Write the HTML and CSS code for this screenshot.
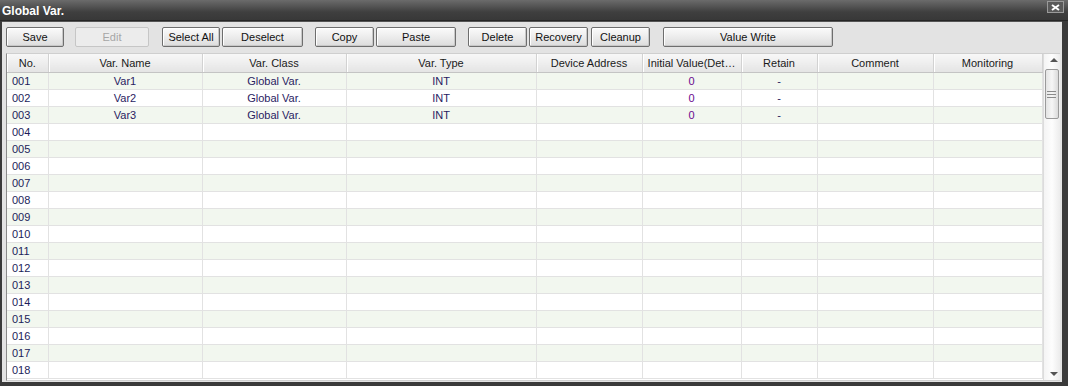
FILE: index.html
```html
<!DOCTYPE html>
<html lang="en">
<head>
    <meta charset="UTF-8">
    <title>Global Var.</title>
    <link rel="stylesheet" href="styles.css">
</head>
<body>
    <div class="window">
        <div class="titlebar">
            <span class="title">Global Var.</span>
            <span class="close">
                <svg width="11" height="7" viewBox="0 0 11 7"><path d="M2 1 L9 6 M9 1 L2 6" stroke="#fff" stroke-width="2"/></svg>
            </span>
        </div>

        <div class="panel">
            <!-- Toolbar -->
            <div class="toolbar">
                <div class="group"><button class="btn w58">Save</button></div>
                <div class="group g11"><button class="btn w74" disabled>Edit</button></div>
                <div class="group g13">
                    <button class="btn w58">Select All</button>
                    <button class="btn w81">Deselect</button>
                </div>
                <div class="group">
                    <button class="btn w59">Copy</button>
                    <button class="btn w80">Paste</button>
                </div>
                <div class="group">
                    <button class="btn w59">Delete</button>
                    <button class="btn w59">Recovery</button>
                    <button class="btn w59 m1">Cleanup</button>
                </div>
                <div class="group g14"><button class="btn w170">Value Write</button></div>
            </div>

            <!-- Variable grid -->
            <div class="grid">
                <table class="vars">
                    <colgroup>
                        <col style="width:41px">
                        <col style="width:154px">
                        <col style="width:144px">
                        <col style="width:190px">
                        <col style="width:106px">
                        <col style="width:99px">
                        <col style="width:76px">
                        <col style="width:116px">
                        <col style="width:109px">
                    </colgroup>
                    <thead>
                        <tr>
                            <th>No.</th>
                            <th>Var. Name</th>
                            <th>Var. Class</th>
                            <th>Var. Type</th>
                            <th>Device Address</th>
                            <th>Initial Value(Det…</th>
                            <th>Retain</th>
                            <th>Comment</th>
                            <th>Monitoring</th>
                        </tr>
                    </thead>
                    <tbody id="rows"></tbody>
                </table>

                <div class="scrollbar">
                    <div class="arrow up"></div>
                    <div class="track">
                        <div class="thumb"><span></span><span></span><span></span></div>
                    </div>
                    <div class="arrow down"></div>
                </div>
            </div>
        </div>
    </div>

    <script>
        // Fill the grid with the declared variables and empty slots
        const vars = [
            { name: 'Var1', cls: 'Global Var.', type: 'INT', init: '0', retain: '-' },
            { name: 'Var2', cls: 'Global Var.', type: 'INT', init: '0', retain: '-' },
            { name: 'Var3', cls: 'Global Var.', type: 'INT', init: '0', retain: '-' }
        ];
        const rowsEl = document.getElementById('rows');

        for (let i = 0; i < 18; i++) {
            const v = vars[i] || {};
            const tr = document.createElement('tr');
            tr.innerHTML = `
                <td class="num">${String(i + 1).padStart(3, '0')}</td>
                <td>${v.name || ''}</td>
                <td>${v.cls || ''}</td>
                <td>${v.type || ''}</td>
                <td></td>
                <td class="init">${v.init || ''}</td>
                <td>${v.retain || ''}</td>
                <td></td>
                <td></td>
            `;
            rowsEl.appendChild(tr);
        }
    </script>
</body>
</html>
```

FILE: styles.css
```css
body {
    margin: 0;
    background: #2c2c2c;
    font-family: "Liberation Sans", Arial, sans-serif;
    font-size: 11px;
}
.window {
    width: 1068px;
    height: 386px;
    background: #3a3a3a;
    overflow: hidden;
}
.titlebar {
    height: 20px;
    display: flex;
    align-items: center;
    justify-content: space-between;
    background: linear-gradient(#6b6b6b, #3f3f3f 60%, #383838);
    border-bottom: 1px solid #262626;
    padding: 0 4px 0 2px;
}
.title {
    color: #fff;
    font-weight: bold;
    font-size: 12px;
    margin-top: 1px;
}
.close {
    width: 15px;
    height: 10px;
    display: flex;
    align-items: center;
    justify-content: center;
    background: #5a5a5a;
    border: 1px solid #9a9a9a;
    margin-top: -6px;
}
.panel {
    margin: 0 6px 0 2px;
    height: 361px;
    background: #e3e3e3;
    border-top: 1px solid #555;
    padding: 5px 2px 0 4px;
    box-sizing: border-box;
}
.toolbar {
    display: flex;
    gap: 12px;
    height: 20px;
}
.group {
    display: flex;
    gap: 2px;
}
.group.g11 { margin-left: -1px; }
.group.g13 { margin-left: 1px; }
.group.g14 { margin-left: 1px; }
.m1 { margin-left: 1px; }
.btn {
    height: 20px;
    padding: 0;
    font-family: inherit;
    font-size: 11px;
    color: #111;
    background: linear-gradient(#fbfbfb, #ececec 50%, #dcdcdc);
    border: 1px solid #6e6e6e;
    border-radius: 2px;
    box-shadow: inset 1px 1px 0 #fff, inset -1px -1px 0 #c8c8c8;
}
.btn:disabled {
    color: #a6a6a6;
    background: #ececec;
    border-color: #c6c6c6;
    box-shadow: none;
}
.w58 { width: 58px; }
.w59 { width: 59px; }
.w74 { width: 74px; }
.w80 { width: 80px; }
.w81 { width: 81px; }
.w170 { width: 170px; }
.grid {
    display: flex;
    margin-top: 6px;
    height: 326px;
    background: #fff;
    border-left: 1px solid #8a8a8a;
    border-top: 1px solid #cfcfcf;
    border-bottom: 1px solid #d0d0d0;
    overflow: hidden;
}
.vars {
    width: 1034px;
    table-layout: fixed;
    border-collapse: collapse;
    align-self: flex-start;
}
.vars th {
    height: 18px;
    padding: 0;
    font-weight: normal;
    color: #1a1a1a;
    background: linear-gradient(#f7f7f7, #eeeeee 50%, #e4e4e4);
    border-bottom: 1px solid #c4c4c4;
    border-right: 1px solid #d2d2d2;
    box-shadow: inset 1px 0 0 #fff;
    white-space: nowrap;
    overflow: hidden;
}
.vars td {
    height: 16px;
    padding: 0;
    text-align: center;
    color: #2a1c62;
    border-right: 1px solid #e2e2e2;
    border-bottom: 1px solid #e2e2e2;
    white-space: nowrap;
}
.vars tbody tr:nth-child(odd) td {
    background: #f2f7ef;
}
.vars td.num {
    text-align: left;
    padding-left: 5px;
    color: #1c1c5a;
}
.vars td.init {
    color: #6a0a8e;
}
.scrollbar {
    width: 19px;
    display: flex;
    flex-direction: column;
    background: linear-gradient(90deg, #f4f4f4, #fdfdfd 50%, #ececec);
    border-left: 1px solid #dcdcdc;
}
.arrow {
    height: 14px;
    position: relative;
}
.arrow::after {
    content: "";
    position: absolute;
    left: 6px;
    border-left: 4px solid transparent;
    border-right: 4px solid transparent;
}
.arrow.up::after {
    top: 4px;
    border-bottom: 4px solid #555;
}
.arrow.down::after {
    top: 6px;
    border-top: 4px solid #555;
}
.track {
    flex: 1;
}
.thumb {
    margin: 1px 1px 0 1px;
    height: 48px;
    border: 1px solid #9a9a9a;
    border-radius: 2px;
    background: linear-gradient(90deg, #e4e4e4, #f6f6f6 50%, #dadada);
    display: flex;
    flex-direction: column;
    align-items: center;
    justify-content: center;
    gap: 2px;
}
.thumb span {
    width: 9px;
    height: 1px;
    background: #8a8a8a;
}
```
